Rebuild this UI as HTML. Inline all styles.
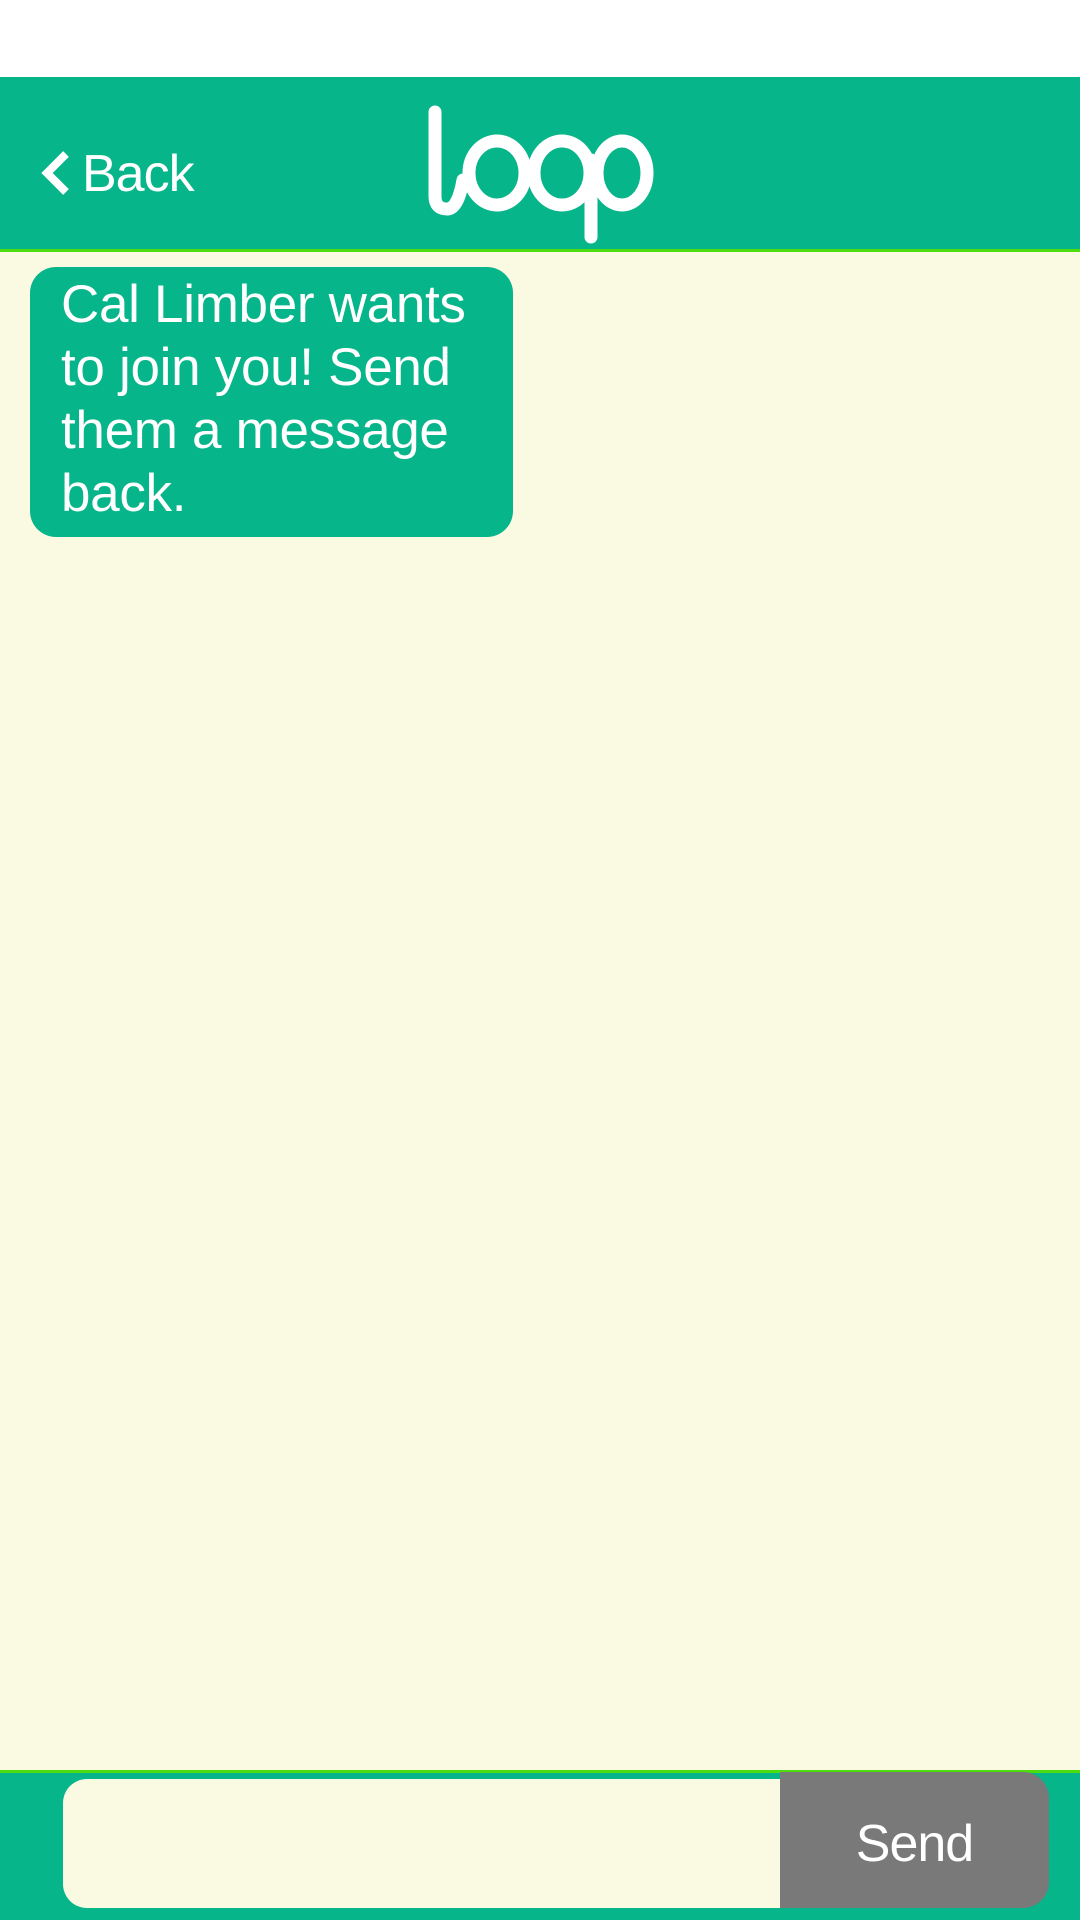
<!DOCTYPE html>
<html><head><meta charset="utf-8"><style>
html,body{margin:0;padding:0}
body{width:1080px;height:1920px;position:relative;background:#fafae3;font-family:"Liberation Sans",sans-serif;overflow:hidden}
.top{position:absolute;left:0;top:0;width:1080px;height:77px;background:#fff}
.hdr{position:absolute;left:0;top:77px;width:1080px;height:172px;background:#06b58a}
.hl{position:absolute;left:0;top:249px;width:1080px;height:3px;background:#4ddc10}
.back{position:absolute;left:82px;top:144px;color:#fff;font-size:52px;letter-spacing:-1px}
.bub{position:absolute;left:30px;top:267px;width:483px;height:270px;background:#06b58a;border-radius:26px}
.bub div{position:absolute;left:31px;top:6px;width:460px;color:#fff;font-size:53px;line-height:63px;letter-spacing:-0.3px;white-space:nowrap}
.fl{position:absolute;left:0;top:1770px;width:1080px;height:3px;background:#4ddc10}
.ft{position:absolute;left:0;top:1773px;width:1080px;height:147px;background:#06b58a}
.inp{position:absolute;left:63px;top:1779px;width:740px;height:129px;background:#fafae3;border-radius:24px}
.btn{position:absolute;left:780px;top:1772px;width:269px;height:136px;background:#797979;border-radius:0 26px 26px 0;color:#fff;font-size:52px;text-align:center;line-height:144px;letter-spacing:-1px}
</style></head><body>
<div class="top"></div>
<div class="hdr"></div>
<svg style="position:absolute;left:0;top:0" width="1080" height="260">
<path d="M66,154 L47,173 L66,192" fill="none" stroke="#fff" stroke-width="8"/>
<g fill="none" stroke="#fff" stroke-width="13" stroke-linecap="round">
<path d="M435,112 V196 Q435,209 447,209 Q458,209 463,180"/>
<ellipse cx="497" cy="173" rx="28" ry="32"/>
<ellipse cx="562" cy="173" rx="28" ry="32"/>
<ellipse cx="622" cy="173" rx="25" ry="32"/>
<path d="M591,160 V237"/>
</g>
</svg>
<div class="back">Back</div>
<div class="hl"></div>
<div class="bub"><div>Cal Limber wants<br>to join you! Send<br>them a message<br>back.</div></div>
<div class="fl"></div>
<div class="ft"></div>
<div class="inp"></div>
<div class="btn">Send</div>
</body></html>
